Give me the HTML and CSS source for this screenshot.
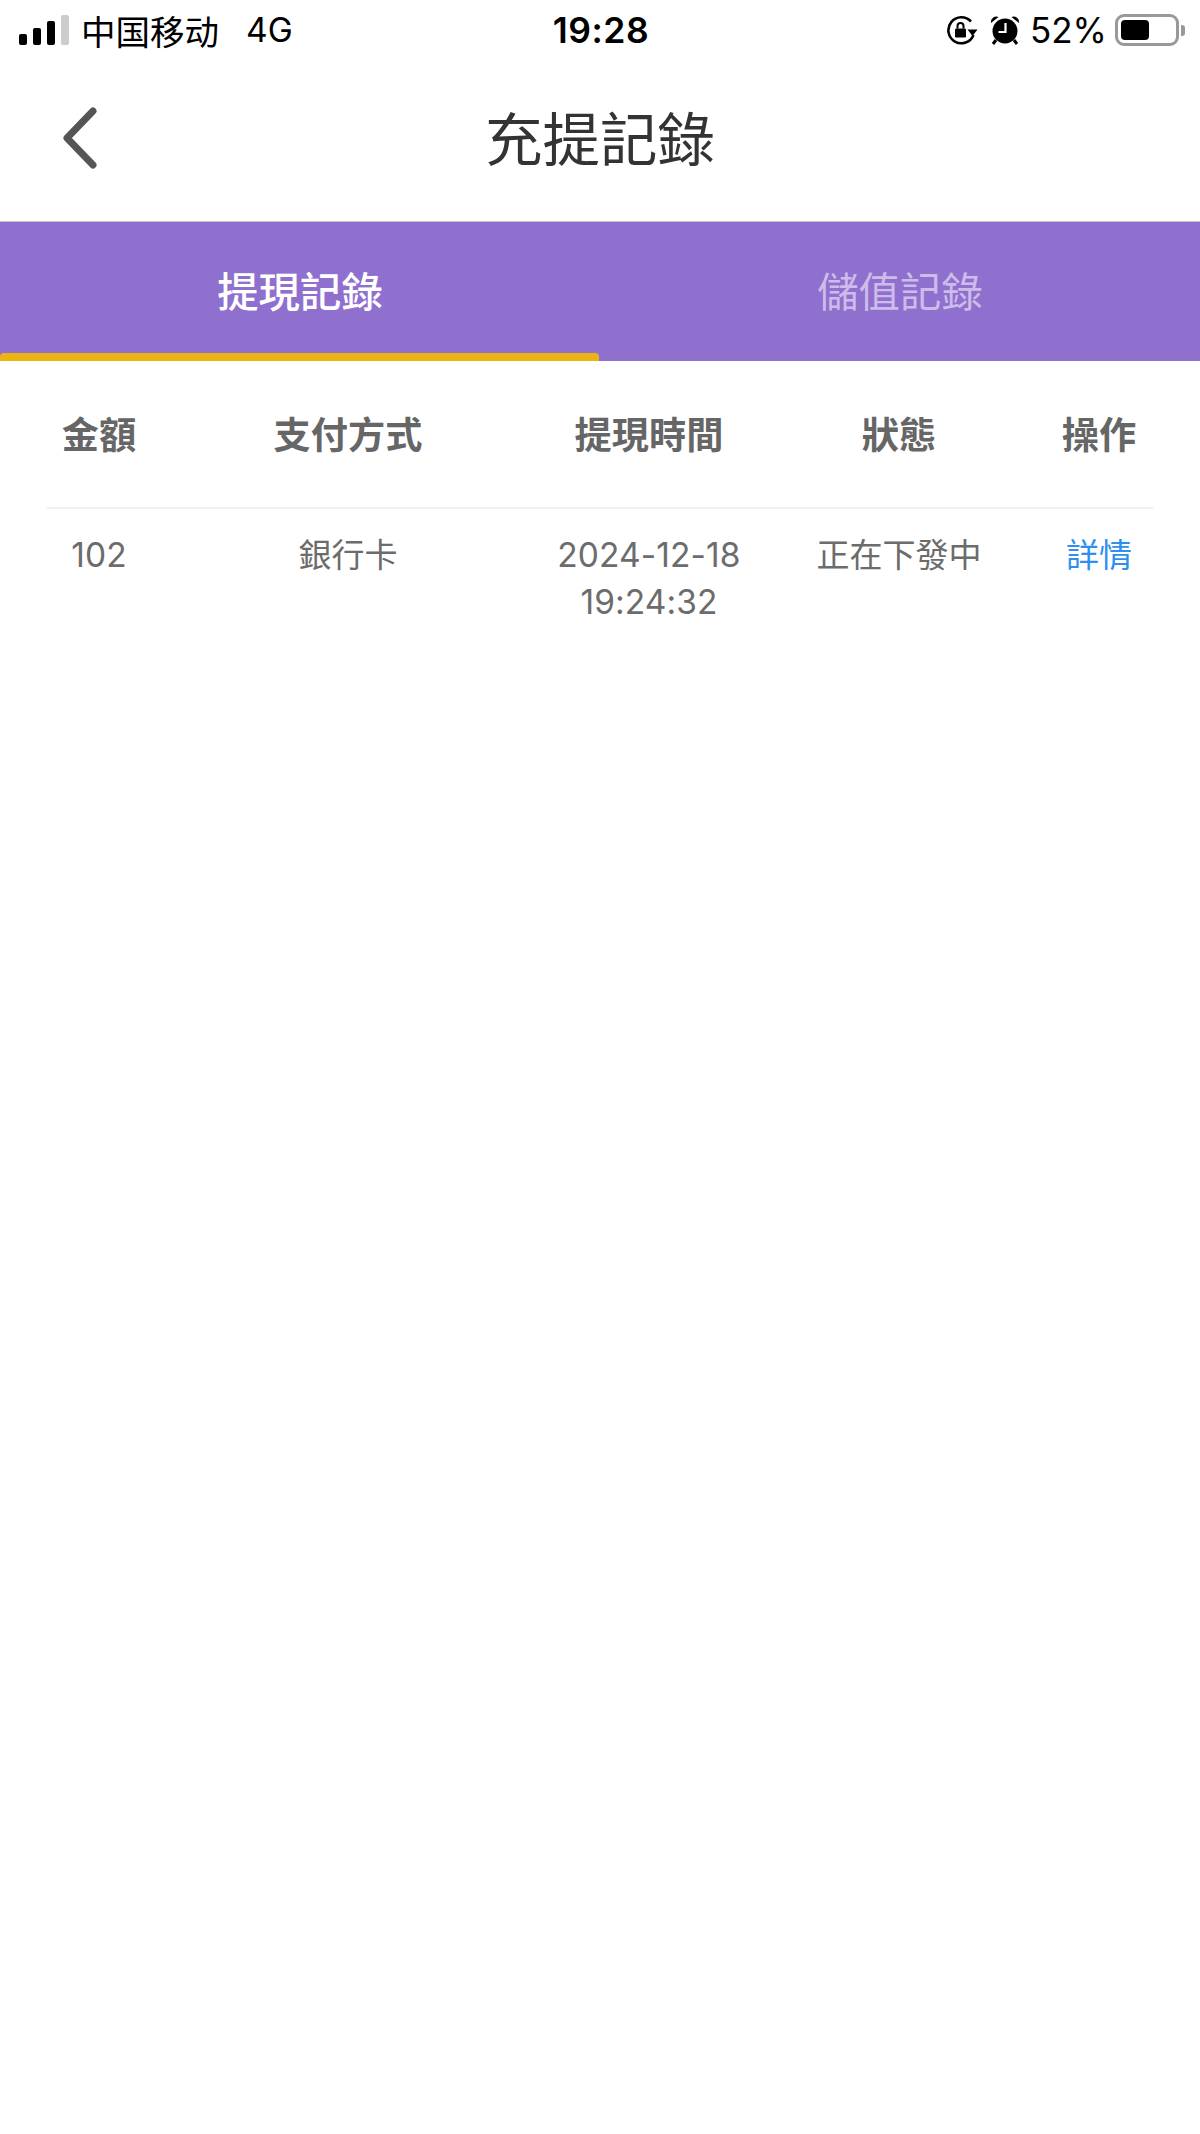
FILE: index.html
```html
<!DOCTYPE html>
<html lang="zh-Hant">
<head>
    <meta charset="UTF-8">
    <meta name="viewport" content="width=device-width, initial-scale=1.0">
    <title>充提記錄</title>
    <link rel="stylesheet" href="styles.css">
</head>
<body>

    <div class="status-bar">
        <div class="status-left">
            <div class="signal">
                <span class="bar bar1"></span>
                <span class="bar bar2"></span>
                <span class="bar bar3"></span>
                <span class="bar bar4"></span>
            </div>
            <span class="carrier">中国移动</span>
            <span class="network">4G</span>
        </div>
        <div class="clock">19:28</div>
        <div class="status-right">
            <svg class="icon-lock" width="32" height="30" viewBox="0 0 32 30">
                <path d="M25 6.500A13 13 0 1 0 27.500 20" fill="none" stroke="#000" stroke-width="2.600"/>
                <path d="M21.500 14.500h10l-5 6.500z" fill="#000"/>
                <rect x="9" y="13.500" width="11" height="9" rx="1.200" fill="#000"/>
                <path d="M11.500 13.500v-2.500a3 3 0 0 1 6 0v2.500" fill="none" stroke="#000" stroke-width="2"/>
            </svg>
            <svg class="icon-alarm" width="30" height="30" viewBox="0 0 30 30">
                <circle cx="15" cy="16" r="12.500" fill="#000"/>
                <path d="M1 8a5.500 5.500 0 0 1 7.500-6z M29 8a5.500 5.500 0 0 0-7.500-6z" fill="#000"/>
                <path d="M6 25l-3 4 M24 25l3 4" stroke="#000" stroke-width="3"/>
                <path d="M15.500 8v9H8.500" fill="none" stroke="#fff" stroke-width="2.200"/>
            </svg>
            <span class="percent">52%</span>
            <div class="battery">
                <div class="battery-level"></div>
            </div>
            <div class="battery-cap"></div>
        </div>
    </div>

    <div class="nav-bar">
        <svg class="back" width="40" height="64" viewBox="0 0 40 64">
            <path d="M33 5L7 32l26 27" fill="none" stroke="#555" stroke-width="7" stroke-linecap="round" stroke-linejoin="round"/>
        </svg>
        <h1 class="nav-title">充提記錄</h1>
    </div>

    <div class="tabs">
        <div class="tab active">提現記錄</div>
        <div class="tab">儲值記錄</div>
    </div>

    <div class="records">
        <div class="row head">
            <div>金額</div>
            <div>支付方式</div>
            <div>提現時間</div>
            <div>狀態</div>
            <div>操作</div>
        </div>
        <div class="row item">
            <div class="num">102</div>
            <div>銀行卡</div>
            <div class="num">2024-12-18<br>19:24:32</div>
            <div>正在下發中</div>
            <div class="link">詳情</div>
        </div>
    </div>

</body>
</html>
```

FILE: styles.css
```css
body {
    margin: 0;
    background: #fff;
    font-family: Inter, "Noto Sans CJK TC", sans-serif;
    color: #666;
}
.status-bar {
    height: 60px;
    display: grid;
    grid-template-columns: 1fr auto 1fr;
    align-items: center;
    padding: 0 15px 0 19px;
    color: #000;
    font-size: 35px;
}
.status-left, .status-right {
    display: flex;
    align-items: center;
}
.status-right {
    justify-content: flex-end;
}
.signal {
    display: flex;
    align-items: flex-end;
    gap: 6px;
    height: 30px;
    margin-right: 12px;
}
.bar {
    width: 8px;
    background: #000;
    border-radius: 2px;
}
.bar1 { height: 11px; }
.bar2 { height: 17px; }
.bar3 { height: 24px; }
.bar4 { height: 30px; background: #ccc; }
.carrier {
    font-family: "Noto Sans CJK SC", sans-serif;
    font-size: 34.500px;
}
.network {
    margin-left: 27px;
    font-size: 33.500px;
}
.clock {
    font-size: 35.500px;
    font-weight: 600;
    letter-spacing: 0.5px;
    margin-left: -2px;
}
.icon-lock {
    margin-right: 12px;
}
.percent {
    margin: 0 8px 0 10px;
    font-size: 35px;
}
.battery {
    width: 64px;
    height: 32px;
    box-sizing: border-box;
    border: 3px solid #999;
    border-radius: 9px;
    padding: 3px;
}
.battery-level {
    width: 28px;
    height: 100%;
    background: #000;
    border-radius: 4px;
}
.battery-cap {
    width: 4px;
    height: 11px;
    margin-left: 2px;
    background: #999;
    border-radius: 0 3px 3px 0;
}
.nav-bar {
    height: 162px;
    box-sizing: border-box;
    display: flex;
    align-items: center;
    justify-content: center;
    position: relative;
    padding-bottom: 9px;
    border-bottom: 1px solid #c4c4c4;
}
.back {
    position: absolute;
    left: 60px;
    top: 46px;
}
.nav-title {
    margin: 0;
    font-size: 57.500px;
    font-weight: 400;
    color: #333;
}
.tabs {
    display: flex;
    height: 139px;
    background: #8f70cf;
}
.tab {
    flex: 1;
    display: flex;
    align-items: center;
    justify-content: center;
    position: relative;
    padding-bottom: 5px;
    font-size: 41.400px;
    color: #cdbcea;
}
.tab.active {
    color: #fff;
    font-weight: 500;
}
/* yellow marker under the selected tab */
.tab.active::after {
    content: "";
    position: absolute;
    left: 0;
    right: 1px;
    bottom: 0;
    height: 8px;
    background: #ecb412;
    border-radius: 4px 4px 0 0;
}
.records {
    margin: 0 47px;
}
.row {
    display: grid;
    grid-template-columns: 104px 394px 208px 292px 108px;
    text-align: center;
}
.head {
    height: 148px;
    box-sizing: border-box;
    padding-top: 50px;
    border-bottom: 2px solid #f0f0f0;
    font-size: 37.200px;
    font-weight: 700;
    line-height: 50px;
}
.item {
    padding-top: 23px;
    font-size: 33px;
    line-height: 47px;
    color: #6c6c6c;
}
.num {
    font-size: 33.500px;
    letter-spacing: 0.1px;
}
.link {
    color: #2f8ff0;
}
```
